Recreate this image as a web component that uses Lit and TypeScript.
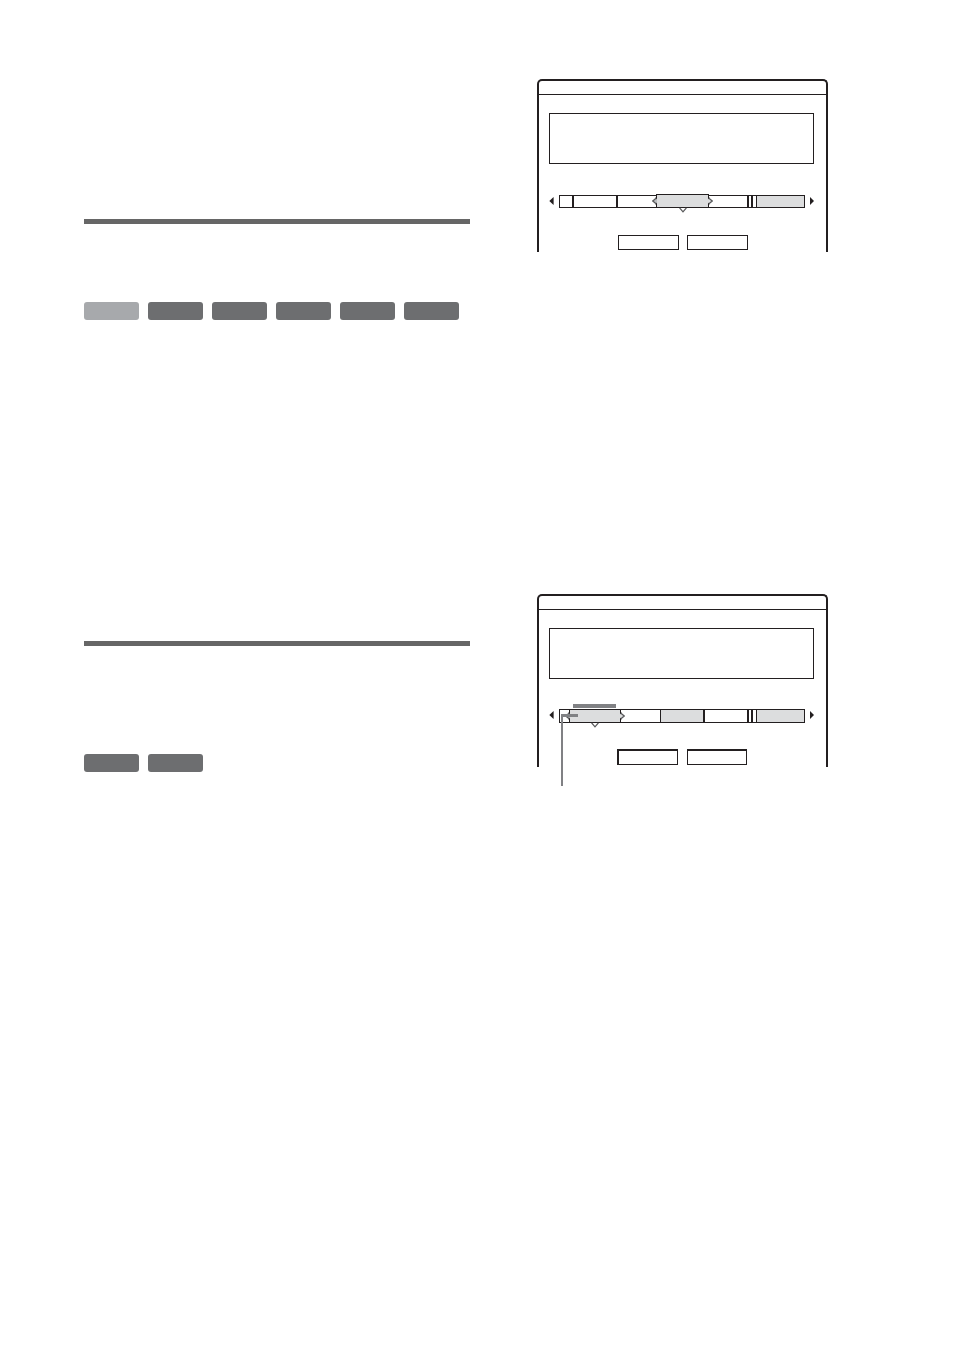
import { LitElement, html, css, nothing } from "lit";
import { customElement, property } from "lit/decorators.js";

type Segment = { size: number; kind: "plain" | "thick" | "thin" | "shaded" | "shaded-thick" | "marked" };

const SCENE_MIDDLE: Segment[] = [
  { size: 14, kind: "thick" },
  { size: 44, kind: "thick" },
  { size: 38, kind: "plain" },
  { size: 53, kind: "marked" },
  { size: 40, kind: "thick" },
  { size: 4, kind: "thick" },
  { size: 4, kind: "thin" },
  { size: 47, kind: "shaded" },
];

const SCENE_START: Segment[] = [
  { size: 9, kind: "plain" },
  { size: 52, kind: "marked" },
  { size: 40, kind: "thin" },
  { size: 44, kind: "shaded-thick" },
  { size: 44, kind: "thick" },
  { size: 4, kind: "thick" },
  { size: 4, kind: "thin" },
  { size: 47, kind: "shaded" },
];

@customElement("scene-panel")
export class ScenePanel extends LitElement {
  @property({ attribute: false }) segments: Segment[] = [];
  @property({ type: Boolean, reflect: true }) callout = false;

  static styles = css`
    :host { display: block; --ink: #231f20; --shade: #dcddde; --lead: #808184; }
    * { box-sizing: border-box; }
    .panel {
      border: 2px solid var(--ink);
      border-bottom: 0;
      border-radius: 5px 5px 0 0;
      padding-bottom: 2px;
    }
    .title { height: 14px; border-bottom: 1px solid var(--ink); }
    .info { height: 51px; margin: 18px 12px 0 10px; border: 1px solid var(--ink); }
    .track { display: flex; margin: 31px 12px 0 10px; height: 13px; align-items: stretch; }
    .arrow { display: block; flex: none; height: 13px; }
    .bar { flex: 1; display: grid; border: 1px solid var(--ink); min-width: 0; }
    .seg { min-width: 0; }
    .thick, .shaded-thick { border-right: 2px solid var(--ink); }
    .thin { border-right: 1px solid var(--ink); }
    .shaded, .shaded-thick { background: var(--shade); }
    .marked {
      position: relative;
      background: var(--shade);
      border: 1px solid var(--ink);
      border-width: 1px 1px 0;
      margin-top: -2px;
    }
    .grip { position: absolute; display: block; }
    .grip-left { left: -5px; top: 2px; }
    .grip-right { right: -5px; top: 2px; }
    .grip-down { left: calc(50% - 4px); bottom: -6px; }
    .actions { display: flex; justify-content: center; gap: 8px; margin-top: 27px; padding-left: 1px; }
    .action {
      width: 61px; height: 15px; padding: 0; margin: 0;
      background: #fff; border: 1px solid var(--ink); border-radius: 0;
    }
    .span-line, .lead { position: absolute; display: block; background: var(--lead); }
    .span-line { left: 3px; right: 4px; top: -6px; height: 4px; }
    .lead-across { left: -9px; top: 4px; width: 17px; height: 3px; }
    .lead-down { left: -9px; top: 4px; width: 2px; height: 72px; }

    :host([callout]) .track { margin-top: 30px; height: 14px; }
    :host([callout]) .marked { margin-top: 0; border-top: 0; }
    :host([callout]) .actions { margin-top: 26px; gap: 9px; padding: 0 1px 0 0; }
    :host([callout]) .action { height: 16px; width: 60px; border-top-width: 2px; }
    :host([callout]) .action:first-child { width: 61px; border-left-width: 2px; }
  `;

  private marker() {
    return html`
      <svg class="grip grip-left" width="5" height="8" viewBox="0 0 5 8">
        <path d="M5 .5 L.8 4 L5 7.5Z" fill="#bcbec0" />
        <path d="M5 .5 L.8 4 L5 7.5" fill="none" stroke="#58595b" stroke-width="1.3" />
        <path d="M3.4 0 H5 V2.4Z M3.4 8 H5 V5.6Z" fill="#231f20" />
      </svg>
      <svg class="grip grip-right" width="5" height="8" viewBox="0 0 5 8">
        <path d="M0 .5 L4.2 4 L0 7.5Z" fill="#dcddde" />
        <path d="M0 .5 L4.2 4 L0 7.5" fill="none" stroke="#58595b" stroke-width="1.3" />
        <path d="M1.6 0 H0 V2.4Z M1.6 8 H0 V5.6Z" fill="#231f20" />
      </svg>
      <svg class="grip grip-down" width="8" height="6" viewBox="0 0 8 6">
        <path d="M.8 1 L4 4.8 L7.2 1Z" fill="#fff" />
        <path d="M.6 .8 L4 4.8 L7.4 .8" fill="none" stroke="#58595b" stroke-width="1.3" />
      </svg>
      ${this.callout
        ? html`<span class="span-line"></span>
            <span class="lead lead-across"></span>
            <span class="lead lead-down"></span>`
        : nothing}
    `;
  }

  render() {
    const columns = this.segments.map((s) => `minmax(0, ${s.size}fr)`).join(" ");
    return html`
      <section class="panel">
        <header class="title"></header>
        <div class="info"></div>
        <div class="track">
          <svg class="arrow" width="10" height="13" viewBox="0 0 10 13">
            <path d="M.3 6 L4.6 2 V10Z" fill="#231f20" />
          </svg>
          <div class="bar" style="grid-template-columns: ${columns}">
            ${this.segments.map(
              (s) => html`<div class="seg ${s.kind}">${s.kind === "marked" ? this.marker() : nothing}</div>`
            )}
          </div>
          <svg class="arrow" width="9" height="13" viewBox="0 0 9 13">
            <path d="M9 6 L5 2 V10Z" fill="#231f20" />
          </svg>
        </div>
        <div class="actions">
          <button class="action" type="button"></button>
          <button class="action" type="button"></button>
        </div>
      </section>
    `;
  }
}

@customElement("app-root")
export class AppRoot extends LitElement {
  static styles = css`
    :host {
      display: block;
      min-height: 100vh;
      background: #fff;
      font-family: "Liberation Sans", Arial, sans-serif;
    }
    * { box-sizing: border-box; }
    .page {
      display: grid;
      grid-template-columns: minmax(0, 386fr) minmax(0, 291fr);
      column-gap: 67px;
      padding: 79px 126px 79px 84px;
      align-items: start;
    }
    .topics { padding-top: 140px; display: grid; gap: 321px; }
    .rule { height: 5px; margin: 0; border: 0; background: #666; }
    .badges { display: flex; gap: 9px; margin: 78px 0 0; padding: 0; list-style: none; }
    .badges-low { margin-top: 108px; }
    .badge { flex: none; width: 55px; height: 18px; border-radius: 3px; background: #6d6e70; }
    .badge-off { background: #a7a9ac; }
    .screens { display: grid; gap: 342px; }
  `;

  private badges(count: number, firstOff: boolean) {
    return Array.from(
      { length: count },
      (_, i) => html`<li class="badge ${firstOff && i === 0 ? "badge-off" : ""}"></li>`
    );
  }

  render() {
    return html`
      <main class="page">
        <div class="topics">
          <section>
            <hr class="rule" />
            <ul class="badges">${this.badges(6, true)}</ul>
          </section>
          <section>
            <hr class="rule" />
            <ul class="badges badges-low">${this.badges(2, false)}</ul>
          </section>
        </div>
        <div class="screens">
          <scene-panel .segments=${SCENE_MIDDLE}></scene-panel>
          <scene-panel callout .segments=${SCENE_START}></scene-panel>
        </div>
      </main>
    `;
  }
}
